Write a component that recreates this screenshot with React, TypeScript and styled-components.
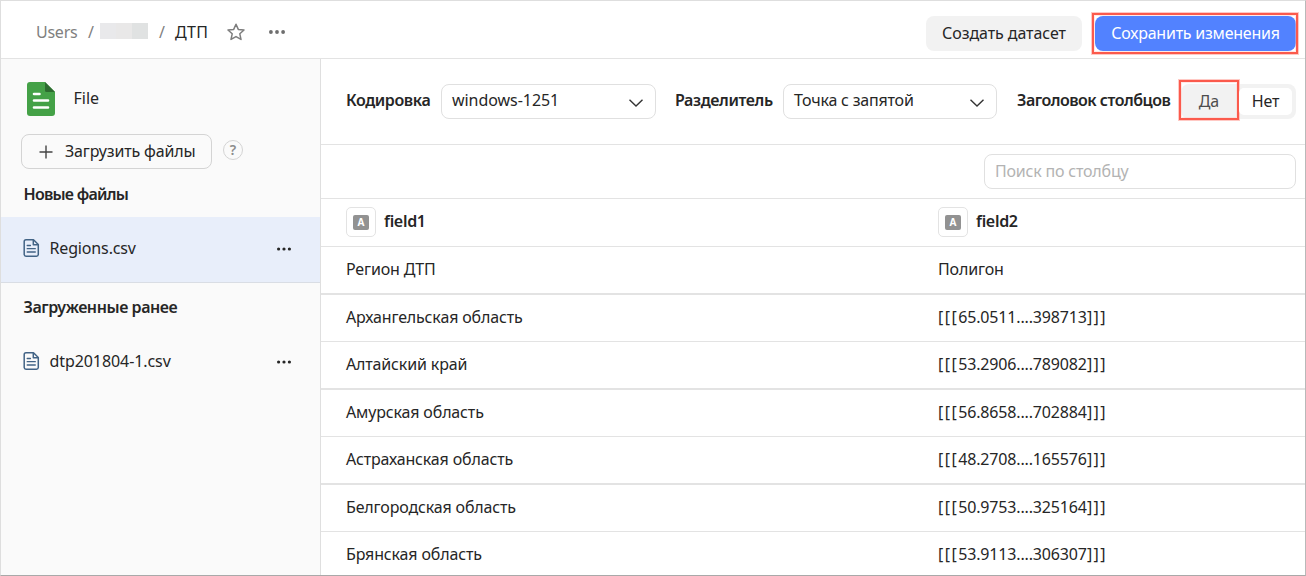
import React from 'react';
import styled, { createGlobalStyle } from 'styled-components';

const Global = createGlobalStyle`
  *, *::before, *::after { box-sizing: border-box; }
  body { margin: 0; background: #fff; }
`;

const Page = styled.div`
  width: 1306px;
  height: 576px;
  display: flex;
  flex-direction: column;
  overflow: hidden;
  background: #fff;
  border: 1px solid #dedede;
  border-right-color: #b9b9b9;
  border-bottom-color: #a9a9a9;
  font: 400 16px/20px 'Noto Sans', 'Open Sans', sans-serif;
  color: #262626;
`;

const Text = styled.span<{ $ls?: number; $bold?: boolean; $color?: string }>`
  white-space: nowrap;
  letter-spacing: ${(p) => p.$ls ?? -0.15}px;
  font-weight: ${(p) => (p.$bold ? 600 : 400)};
  color: ${(p) => p.$color ?? 'inherit'};
`;

const Header = styled.header`
  flex: none;
  height: 58px;
  display: flex;
  justify-content: space-between;
  border-bottom: 1px solid #e3e3e3;
  padding: 15px 9px 0 35px;
`;

const Breadcrumbs = styled.nav`
  display: flex;
  align-items: center;
  height: 32px;
`;

const Crumb = styled.div<{ $w: number }>`
  flex: none;
  width: ${(p) => p.$w}px;
  display: flex;
  align-items: center;
`;

const Redacted = styled.div`
  width: 48px;
  height: 16px;
  margin-top: -2px;
  background: linear-gradient(90deg, #e9e9eb 0 16px, #e9e8e8 16px 32px, #e0e2e2 32px);
`;

const Actions = styled.div`
  display: flex;
  gap: 13px;
`;

const Button = styled.button<{ $primary?: boolean; $w: number }>`
  position: relative;
  width: ${(p) => p.$w}px;
  height: 35px;
  padding: 0 0 2px;
  border: 0;
  border-radius: 8px;
  font: inherit;
  color: ${(p) => (p.$primary ? '#fff' : '#262626')};
  background: ${(p) => (p.$primary ? '#5282ff' : '#f2f2f2')};
`;

const Highlight = styled.span<{ $inset: string }>`
  position: absolute;
  inset: ${(p) => p.$inset};
  border: 2px solid #fb5a4c;
  box-shadow: 0 0 0 1px #ffc9c4, inset 0 0 0 1px #ffc9c466;
`;

const Body = styled.div`
  flex: 1;
  min-height: 0;
  display: flex;
`;

const Sidebar = styled.aside`
  flex: none;
  width: 320px;
  background: #fafafa;
  border-right: 1px solid #dfdfdf;
`;

const SourceRow = styled.div`
  display: flex;
  align-items: center;
  height: 75px;
  padding: 5px 0 0 25px;
  gap: 17.5px;
  & > span { margin-top: -2px; }
`;

const UploadRow = styled.div`
  display: flex;
  height: 35px;
  padding-left: 20px;
  gap: 11px;
`;

const UploadButton = styled.button`
  width: 191px;
  height: 35px;
  display: flex;
  align-items: center;
  gap: 12px;
  padding: 0 0 0 17px;
  border: 1px solid #d4d4d4;
  border-radius: 8px;
  background: transparent;
  font: inherit;
  color: inherit;
  & > span { margin-top: -2px; }
`;

const Help = styled.span`
  width: 20px;
  height: 20px;
  margin-top: 6px;
  border: 1px solid #d4d4d4;
  border-radius: 50%;
  font: 600 14px/18px 'Noto Sans', sans-serif;
  text-align: center;
  color: #8c8c8c;
`;

const GroupTitle = styled.div<{ $h: number; $pad?: number }>`
  height: ${(p) => p.$h}px;
  display: flex;
  align-items: center;
  padding: ${(p) => p.$pad ?? 0}px 0 0 22.5px;
`;

const FileRow = styled.div<{ $selected?: boolean }>`
  height: ${(p) => (p.$selected ? 66 : 63)}px;
  display: flex;
  align-items: center;
  padding: 0 29.5px 4px 20px;
  gap: 8.5px;
  background: ${(p) => (p.$selected ? '#e8eefa' : 'transparent')};
  border-bottom: ${(p) => (p.$selected ? '1px solid #d9dde4' : '0')};
  & > svg:last-child { margin-top: 3px; }
`;

const Spacer = styled.span`
  flex: 1;
`;

const Main = styled.main`
  flex: 1;
  min-width: 0;
`;

const Settings = styled.div`
  display: flex;
  height: 86px;
  padding: 25px 9px 0 25px;
  border-bottom: 1px solid #e3e3e3;
`;

const SettingLabel = styled.label<{ $w: number }>`
  flex: none;
  width: ${(p) => p.$w}px;
  padding-top: 6px;
`;

const Select = styled.div<{ $w: number; $gap: number }>`
  flex: none;
  width: ${(p) => p.$w}px;
  height: 35px;
  margin-right: ${(p) => p.$gap}px;
  padding: 0 11px 3px 10px;
  display: flex;
  align-items: center;
  justify-content: space-between;
  border: 1px solid #e0e0e0;
  border-radius: 8px;
  & > svg { margin-top: 5px; }
`;

const Toggle = styled.div`
  flex: 1;
  height: 35px;
  display: flex;
  background: #f2f2f2;
  border-radius: 8px;
`;

const ToggleItem = styled.div<{ $raised?: boolean; $w: number }>`
  position: relative;
  width: ${(p) => p.$w}px;
  height: ${(p) => (p.$raised ? 27 : 35)}px;
  margin-top: ${(p) => (p.$raised ? 4 : 0)}px;
  padding: 0 ${(p) => (p.$raised ? 0 : 2)}px 2px 0;
  display: flex;
  align-items: center;
  justify-content: center;
  border-radius: ${(p) => (p.$raised ? 5 : 8)}px;
  background: ${(p) => (p.$raised ? '#fff' : 'transparent')};
`;

const SearchRow = styled.div`
  height: 54px;
  display: flex;
  justify-content: flex-end;
  padding: 9px 9px 0;
  border-bottom: 1px solid #e3e3e3;
`;

const Search = styled.div`
  width: 312px;
  height: 35px;
  display: flex;
  align-items: center;
  padding: 0 0 1px 10px;
  border: 1px solid #e0e0e0;
  border-radius: 8px;
`;

const Row = styled.div<{ $h: number; $line: number }>`
  display: grid;
  grid-template-columns: 592px 1fr;
  align-items: center;
  height: ${(p) => p.$h}px;
  padding: 0 0 2px 25px;
  border-bottom: ${(p) => p.$line}px solid #e3e3e3;
`;

const FieldHead = styled.div`
  display: flex;
  align-items: center;
  gap: 8px;
  padding-top: 1px;
  & > span { margin-top: -2px; }
`;

const TypeBox = styled.div`
  width: 30px;
  height: 30px;
  display: flex;
  align-items: center;
  justify-content: center;
  border: 1px solid #e3e3e3;
  border-radius: 5px;
`;

const TypeBadge = styled.div`
  width: 16px;
  height: 15px;
  border-radius: 2px;
  background: #929292;
  color: #fff;
  font: 700 10px/15px 'Noto Sans', sans-serif;
  text-align: center;
`;

const Brackets = styled.span`
  letter-spacing: 1.45px;
`;

const Dots = ({ color = '#262626', size = 14, r = 1.6 }) => (
  <svg width={size} height="4" viewBox={`0 0 ${size} 4`} fill={color}>
    <circle cx={r} cy="2" r={r} />
    <circle cx={size / 2} cy="2" r={r} />
    <circle cx={size - r} cy="2" r={r} />
  </svg>
);

const Star = () => (
  <svg width="18" height="18" viewBox="0 0 18 18" fill="none" stroke="#7d7d7d" strokeWidth="1.5" strokeLinejoin="round">
    <path d="M9 1.2 11.3 6.4 17 7 12.8 10.8 14 16.4 9 13.6 4 16.4 5.2 10.8 1 7 6.7 6.4Z" />
  </svg>
);

const Chevron = () => (
  <svg width="16" height="10" viewBox="0 0 16 10" fill="none" stroke="#333" strokeWidth="1.4">
    <path d="M1.500 1.800 8 8 14.500 1.800" />
  </svg>
);

const Plus = () => (
  <svg width="14" height="14" viewBox="0 0 14 14" stroke="#444" strokeWidth="1.4">
    <path d="M7 .5V13.5M.5 7H13.5" />
  </svg>
);

const SourceIcon = () => (
  <svg width="30" height="34" viewBox="0 0 30 34">
    <path d="M4 0H19L29 10V31A3 3 0 0 1 26 34H4A3 3 0 0 1 1 31V3A3 3 0 0 1 4 0Z" fill="#44a147" />
    <path d="M19 0 29 10H20.500A1.500 1.500 0 0 1 19 8.500Z" fill="#2c6b2f" />
    <path d="M8 12H13.500M8 18.500H22M8 25.500H22" stroke="#fff" strokeWidth="2.600" strokeLinecap="round" />
  </svg>
);

const DocIcon = () => (
  <svg width="20" height="18" viewBox="0 0 20 18" fill="none" stroke="#426385" strokeWidth="1.5" strokeLinejoin="round">
    <path d="M5 .8H12.500L17.300 5.500V15.500A1.800 1.800 0 0 1 15.500 17.200H5A1.800 1.800 0 0 1 3.200 15.500V2.600A1.800 1.800 0 0 1 5 .8ZM12.300 1V5.700H17" />
    <path d="M6.200 6.500H9.500M6.200 9.700H14.300M6.200 13H14.300" strokeLinecap="round" strokeWidth="1.300" />
  </svg>
);

const rows = [
  { region: 'Регион ДТП', coords: '', h: 48, line: 2 },
  { region: 'Архангельская область', coords: '65.0511....398713', h: 47, line: 1 },
  { region: 'Алтайский край', coords: '53.2906....789082', h: 48, line: 2 },
  { region: 'Амурская область', coords: '56.8658....702884', h: 47, line: 1 },
  { region: 'Астраханская область', coords: '48.2708....165576', h: 48, line: 2 },
  { region: 'Белгородская область', coords: '50.9753....325164', h: 47, line: 1 },
  { region: 'Брянская область', coords: '53.9113....306307', h: 47, line: 1 },
];

export default function App() {
  return (
    <Page>
      <Global />
      <Header>
        <Breadcrumbs>
          <Crumb $w={52}><Text $ls={-0.25} $color="#808080">Users</Text></Crumb>
          <Crumb $w={12}><Text $color="#808080">/</Text></Crumb>
          <Crumb $w={59}><Redacted /></Crumb>
          <Crumb $w={16}><Text $color="#808080">/</Text></Crumb>
          <Crumb $w={52}><Text $ls={0.3}>ДТП</Text></Crumb>
          <Crumb $w={42}><Star /></Crumb>
          <Dots color="#6e6e6e" size={16} r={1.9} />
        </Breadcrumbs>
        <Actions>
          <Button $w={156}><Text $ls={-0.07}>Создать датасет</Text></Button>
          <Button $primary $w={201}>
            <Text $ls={-0.23}>Сохранить изменения</Text>
            <Highlight $inset="-3px -2px -3px -3px" />
          </Button>
        </Actions>
      </Header>
      <Body>
        <Sidebar>
          <SourceRow><SourceIcon /><Text $ls={0}>File</Text></SourceRow>
          <UploadRow>
            <UploadButton><Plus /><Text>Загрузить файлы</Text></UploadButton>
            <Help>?</Help>
          </UploadRow>
          <GroupTitle $h={48} $pad={2}><Text $bold $ls={-0.75}>Новые файлы</Text></GroupTitle>
          <FileRow $selected><DocIcon /><Text>Regions.csv</Text><Spacer /><Dots /></FileRow>
          <GroupTitle $h={48}><Text $bold $ls={-0.43}>Загруженные ранее</Text></GroupTitle>
          <FileRow><DocIcon /><Text $ls={-0.08}>dtp201804-1.csv</Text><Spacer /><Dots /></FileRow>
        </Sidebar>
        <Main>
          <Settings>
            <SettingLabel $w={95}><Text $bold $ls={-0.4}>Кодировка</Text></SettingLabel>
            <Select $w={215} $gap={19}><Text $ls={-0.05}>windows-1251</Text><Chevron /></Select>
            <SettingLabel $w={108}><Text $bold $ls={-0.38}>Разделитель</Text></SettingLabel>
            <Select $w={214} $gap={20}><Text $ls={-0.2}>Точка с запятой</Text><Chevron /></Select>
            <SettingLabel $w={164}><Text $bold $ls={-0.5}>Заголовок столбцов</Text></SettingLabel>
            <Toggle>
              <ToggleItem $w={58}><Text $color="#4d4d4d">Да</Text><Highlight $inset="-4px 0 -1px -2px" /></ToggleItem>
              <ToggleItem $raised $w={53}><Text>Нет</Text></ToggleItem>
            </Toggle>
          </Settings>
          <SearchRow><Search><Text $ls={-0.2} $color="#b3b3b3">Поиск по столбцу</Text></Search></SearchRow>
          <Row $h={48} $line={1}>
            {['field1', 'field2'].map((name) => (
              <FieldHead key={name}>
                <TypeBox><TypeBadge>A</TypeBadge></TypeBox>
                <Text $bold $ls={-0.3}>{name}</Text>
              </FieldHead>
            ))}
          </Row>
          {rows.map((r) => (
            <Row key={r.region} $h={r.h} $line={r.line}>
              <Text>{r.region}</Text>
              {r.coords ? (
                <Text><Brackets>[[[</Brackets>{r.coords}<Brackets>]]]</Brackets></Text>
              ) : (
                <Text>Полигон</Text>
              )}
            </Row>
          ))}
        </Main>
      </Body>
    </Page>
  );
}
